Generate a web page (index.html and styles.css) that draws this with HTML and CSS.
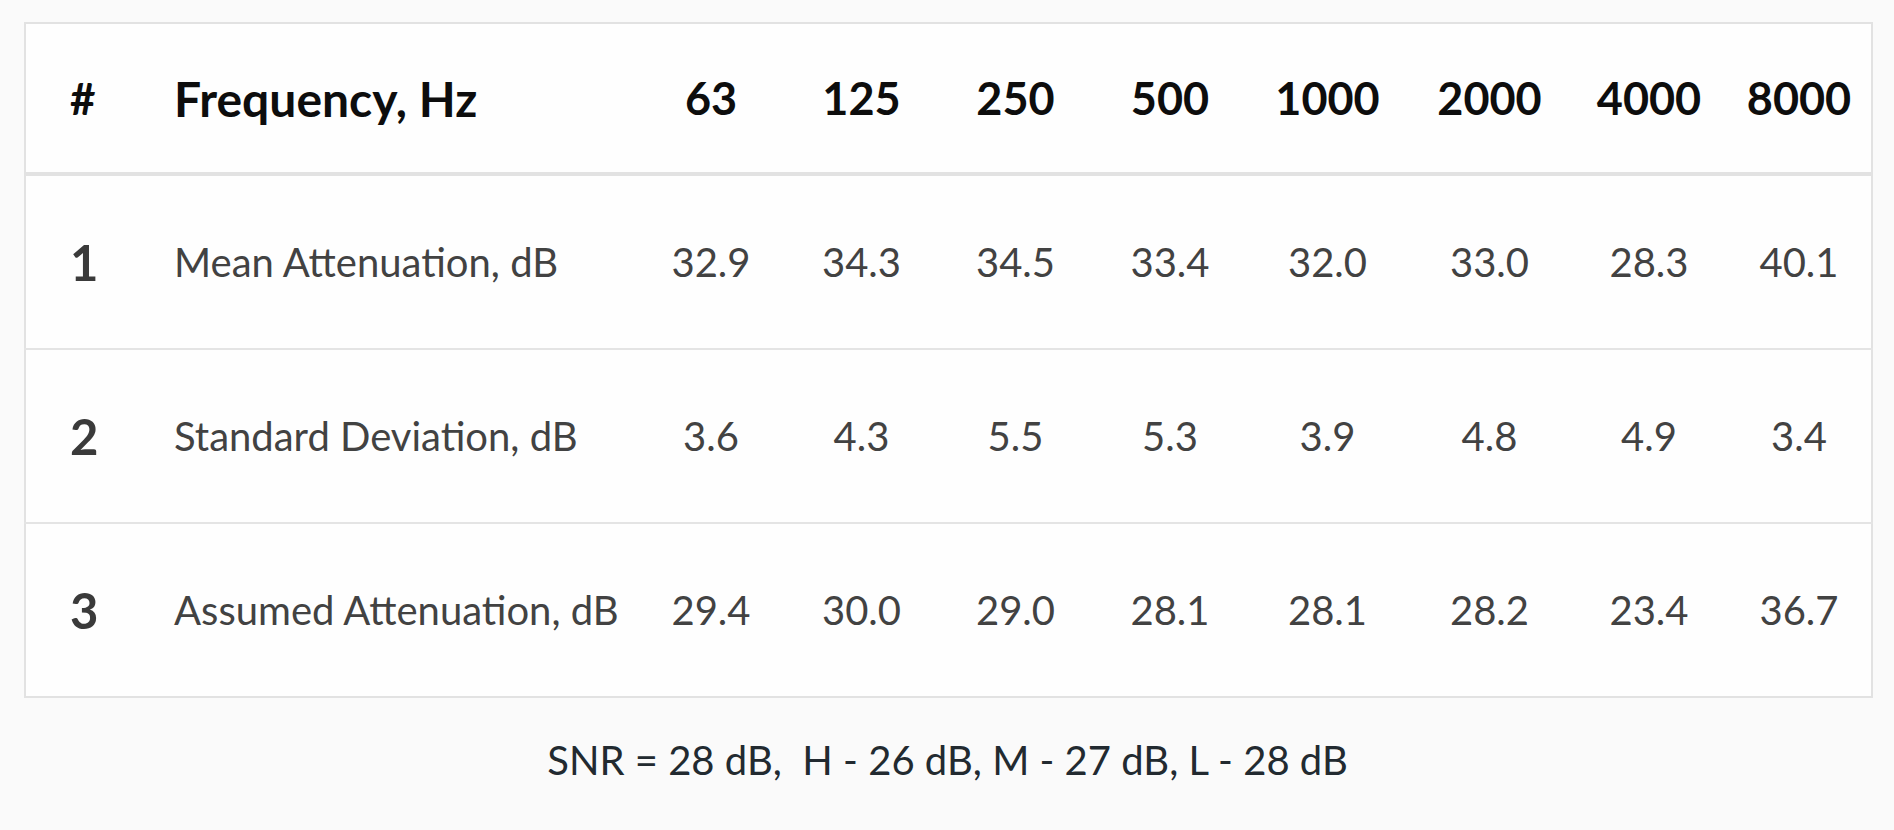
FILE: index.html
```html
<!DOCTYPE html>
<html lang="en">
<head>
<meta charset="utf-8">
<title>Attenuation table</title>
<link rel="stylesheet" href="styles.css">
</head>
<body>
<main class="page">
  <table class="att">
    <colgroup>
      <col class="c-num">
      <col class="c-label">
      <col class="c-v1"><col class="c-v2"><col class="c-v3"><col class="c-v4">
      <col class="c-v5"><col class="c-v6"><col class="c-v7"><col class="c-v8">
    </colgroup>
    <thead>
      <tr>
        <th class="num">#</th>
        <th class="label">Frequency, Hz</th>
        <th>63</th><th>125</th><th>250</th><th>500</th>
        <th>1000</th><th>2000</th><th>4000</th><th>8000</th>
      </tr>
    </thead>
    <tbody>
      <tr>
        <td class="num">1</td>
        <td class="label">Mean Attenuation, dB</td>
        <td>32.9</td><td>34.3</td><td>34.5</td><td>33.4</td>
        <td>32.0</td><td>33.0</td><td>28.3</td><td>40.1</td>
      </tr>
      <tr>
        <td class="num">2</td>
        <td class="label">Standard Deviation, dB</td>
        <td>3.6</td><td>4.3</td><td>5.5</td><td>5.3</td>
        <td>3.9</td><td>4.8</td><td>4.9</td><td>3.4</td>
      </tr>
      <tr>
        <td class="num">3</td>
        <td class="label">Assumed Attenuation, dB</td>
        <td>29.4</td><td>30.0</td><td>29.0</td><td>28.1</td>
        <td>28.1</td><td>28.2</td><td>23.4</td><td>36.7</td>
      </tr>
    </tbody>
  </table>
  <p class="note">SNR = 28 dB,&nbsp; H - 26 dB, M - 27 dB, L - 28 dB</p>
</main>
</body>
</html>
```

FILE: styles.css
```css
html, body {
  margin: 0;
  padding: 0;
  background: #fafafa;
}

body {
  font-family: Lato, "Noto Sans", "Liberation Sans", sans-serif;
  color: #444;
}

.page {
  padding: 22px 23px 0 24px;
  display: flex;
  flex-direction: column;
  align-items: stretch;
}

.att {
  width: 1847px;
  border-collapse: collapse;
  table-layout: fixed;
  background: #fefefe;
  border: 2px solid #e2e2e2;
}

.c-num { width: 124px; }
.c-label { width: 488px; }
.c-v1 { width: 148px; }
.c-v2 { width: 153px; }
.c-v3 { width: 155px; }
.c-v4 { width: 154px; }
.c-v5 { width: 161px; }
.c-v6 { width: 163px; }
.c-v7 { width: 156px; }
.c-v8 { width: 145px; }

.att th,
.att td {
  padding: 0;
  text-align: center;
  white-space: nowrap;
}

.att thead th {
  height: 148px;
  font-size: 45px;
  font-weight: 700;
  color: #0d0d0d;
  border-bottom: 4px solid #e2e2e2;
}

.att thead .label {
  font-size: 48px;
}

.att tbody td {
  height: 172px;
  font-size: 40px;
  font-weight: 400;
  color: #424242;
  border-top: 2px solid #e4e4e4;
}

.att tbody tr:first-child td {
  border-top: none;
}

.att .num {
  text-align: left;
  padding-left: 44px;
}

.att thead .num {
  font-size: 44px;
}

.att tbody .num {
  font-weight: 700;
  color: #3a3a3a;
  font-size: 49px;
}

.att .label {
  text-align: left;
  padding-left: 25px;
}

.note {
  margin: 38px 0 0;
  text-align: center;
  font-size: 40px;
  color: #222a30;
}
```
